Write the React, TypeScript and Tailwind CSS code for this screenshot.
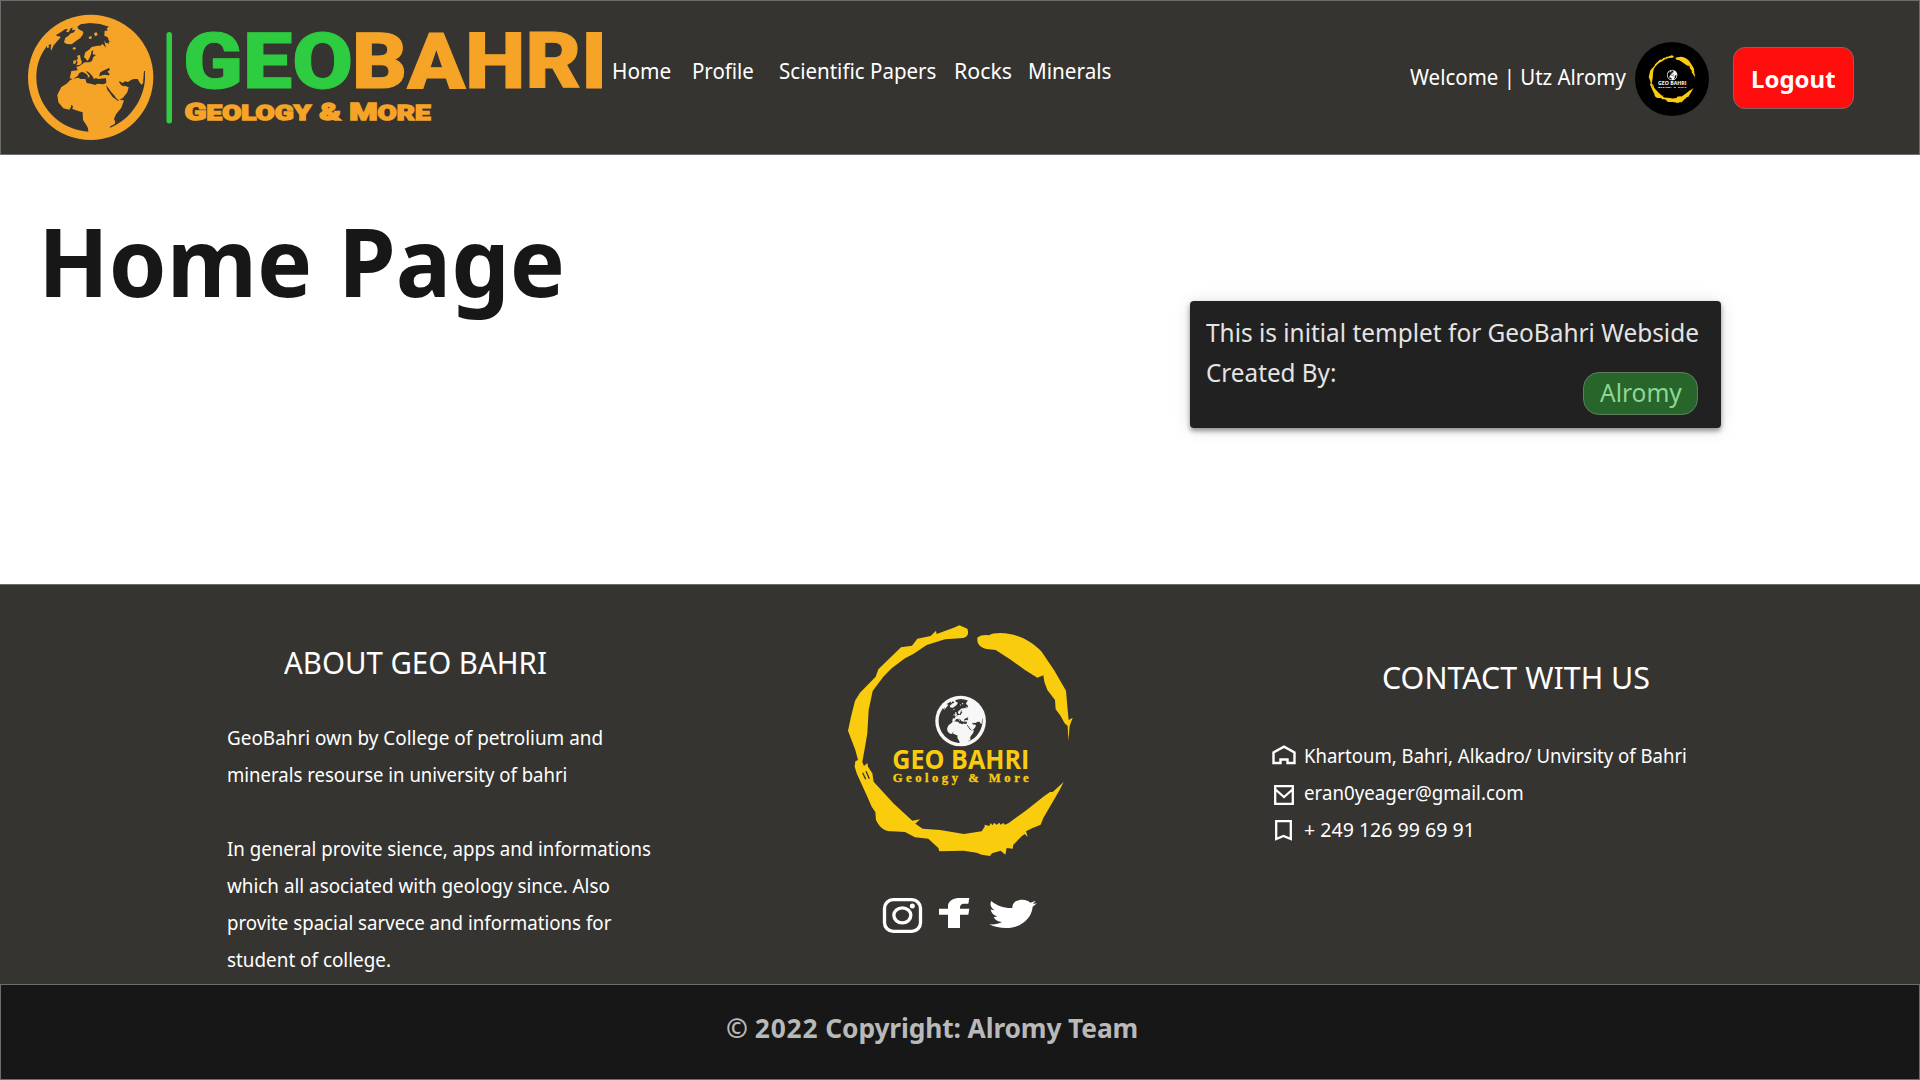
import React from "react";

function Line({ className = "", children }: { className?: string; children: React.ReactNode }) {
  return <span className={`block origin-left whitespace-nowrap ${className}`}>{children}</span>;
}

const OCEANS = [
  "M107,128 L110,122 L112,130 L118,126 L115,120 L124,118 L122,130 L124,137 L130,122 L142,108 L151,98 L150,94 L142,94 L138,90 L152,82 L165,73 L174,72 L168,80 L176,82 L182,70 L188,68 L186,76 L196,74 L192,82 L180,86 L176,92 L166,98 L162,112 L170,117 L185,118 L198,108 L212,98 L219,88 L220,80 L205,72 L202,65 L212,58 L240,54 L270,57 L297,65 L290,70 L293,77 L284,77 L283,92 L293,97 L297,108 L302,112 L296,110 L297,116 L287,113 L283,106 L285,118 L288,128 L278,117 L271,122 L262,122 L245,126 L237,134 L226,142 L222,156 L228,162 L233,168 L238,160 L243,148 L245,138 L250,136 L248,148 L258,150 L250,156 L246,168 L238,172 L224,172 L210,182 L199,186 L203,196 L184,198 L181,212 L179,220 L188,222 L180,226 L170,236 L154,246 L142,270 L145,292 L160,310 L178,314 L183,306 L184,299 L189,304 L187,312 L205,318 L218,322 L219,345 L229,360 L234,370 L235,380 C150,376 79,304 79,217 C79,182 89,153 107,128 Z",
  "M190,221 L203,213 L208,204 L217,200 L228,206 L234,213 L233,220 L240,213 L230,202 L228,197 L238,203 L247,213 L252,222 L258,219 L264,222 L288,220 L289,234 L280,238 L262,236 L256,240 L242,236 L230,234 L226,222 L212,222 L205,218 Z",
  "M267,214 L271,202 L282,196 L297,189 L300,194 L292,200 L299,207 L297,211 L282,209 Z",
  "M288,240 L297,252 L304,262 L312,270 L320,281 L327,286 L339,278 L352,262 L356,247 L344,242 L340,244 L333,240 L327,231 L329,229 L338,234 L345,229 L354,231 L362,226 L371,222 L383,222 L388,231 L394,239 L399,235 L402,198 L405,198 L405,220 C403,280 362,345 299,369 L302,363 L314,357 L316,351 L312,342 L318,328 L334,308 L342,286 L330,285 L323,287 L308,276 L300,265 L292,254 Z",
];
const ISLANDS = [
  "M201,152 L210,150 L212,162 L216,172 L211,179 L199,181 L203,172 L199,166 L204,161 Z",
  "M190,168 L197,164 L198,174 L190,178 Z",
  "M187,129 L195,126 L198,132 L191,134 Z",
  "M252,84 L260,82 L263,90 L255,94 Z",
  "M236,95 L246,94 L244,101 L238,102 Z",
];

function Globe({ land, sea }: { land: string; sea: string }) {
  return (
    <g>
      <circle cx="242" cy="217" r="188" fill={land} />
      {OCEANS.map((d) => <path key={d} d={d} fill={sea} />)}
      {ISLANDS.map((d) => <path key={d} d={d} fill={land} />)}
    </g>
  );
}

function BrandLogo() {
  return (
    <svg className="block h-[153px] w-[610px] shrink-0" viewBox="1 1 610 153">
      <g transform="translate(10 5) scale(0.33333)">
        <Globe land="#f5a427" sea="#363431" />
      </g>
      <rect x="166.5" y="32" width="5.5" height="91.5" rx="2.7" fill="#30cc44" />
      <g className="font-['Roboto'] font-black" fontSize="77" strokeWidth="1">
        <text x="183" y="87.6" textLength="170" lengthAdjust="spacingAndGlyphs" fill="#2ecc40" stroke="#2ecc40">GEO</text>
        <text x="352" y="87.6" textLength="255" lengthAdjust="spacingAndGlyphs" fill="#f5a427" stroke="#f5a427">BAHRI</text>
      </g>
      <text
        x="184.5" y="119.8" textLength="246" lengthAdjust="spacingAndGlyphs" fill="#f5a427"
        stroke="#f5a427" strokeWidth="1.4" className="font-['Roboto'] font-black uppercase" fontSize="24.5"
      >
        G<tspan fontSize="21">eology</tspan> &amp; M<tspan fontSize="21">ore</tspan>
      </text>
    </svg>
  );
}

function RingLogo({ className, sea, title, tagline }: { className: string; sea: string; title: string; tagline: string }) {
  return (
    <svg className={className} viewBox="0 0 780 780">
      <g fill="#f9cc0e">
        <path d="M412,56 L388,46 L375,52 L320,72 L318,62 L302,78 L262,86 L246,107 L213,112 L145,178 L137,200 L90,248 L75,272 L63,320 L54,362 L76,420 L84,450 L76,454 L74,470 L80,490 L96,525 L112,560 L125,590 L136,606 L138,630 C150,655 165,664 185,664 L225,666 L255,682 L295,686 L325,714 L328,724 L400,722 L440,728 L455,734 L480,738 L486,730 L512,722 L526,734 L530,714 L548,716 L550,704 L575,679 L584,672 L593,681 L588,664 L606,655 L632,644 L640,624 L668,576 L690,538 L701,516 L668,546 L660,546 L640,560 L590,600 L535,640 L525,644 L520,639 L512,644 L508,638 L500,644 L492,638 L488,646 L482,639 L478,648 L464,644 L464,650 L455,664 L402,672 L330,660 L278,656 L256,641 L270,628 L247,632 L190,580 L131,515 L127,490 L114,470 L112,459 L102,468 L97,456 L107,400 L112,370 L116,300 L128,243 L160,200 L185,175 L225,145 L250,132 L290,105 L345,88 L400,84 C416,80 416,66 412,56 Z" />
        <path d="M443,82 Q455,73 478,76 Q485,69 512,69 C555,70 600,88 635,125 L672,180 L708,242 L713,300 L716,330 L728,323 L719,348 L715,393 L713,348 L704,340 L690,315 L677,298 L675,270 L652,240 L643,215 L640,196 L622,203 L585,180 L540,148 L497,120 L470,117 C450,114 438,98 443,82 Z" />
      </g>
      <path d="M98,488 L107,508 M108,484 L118,506" stroke={sea} strokeWidth="4" />
      <g transform="translate(294 245.500) scale(0.404)">
        <Globe land="#f7f7f7" sea={sea} />
      </g>
      <text x="187" y="478" textLength="411" lengthAdjust="spacingAndGlyphs" fontSize="80" fill={title} className="font-['Open_Sans'] font-bold">GEO BAHRI</text>
      <text x="188" y="516" textLength="408" fontSize="38" fill={tagline} stroke={tagline} strokeWidth="1" className="font-['Liberation_Serif'] font-bold">Geology &amp; More</text>
    </svg>
  );
}

function SocialIcons() {
  return (
    <svg className="block h-[70px] w-[200px]" viewBox="0 0 600 210">
      <g fill="none" stroke="#fff">
        <rect x="73.500" y="59" width="108" height="95" rx="26" strokeWidth="10" />
        <ellipse cx="127" cy="106" rx="25.500" ry="22.500" strokeWidth="10" />
      </g>
      <circle cx="157" cy="78" r="7.500" fill="#fff" />
      <path fill="#fff" d="M264,144 V104 H237 V86 H264 V76 C266,62 280,54 300,54 H328 L325,71 H312 C304,71 301,75 300,82 V86 H328 L325,104 H300 V144 Z" />
      <path fill="#fff" d="M394,63 C411,78 432,85 457,84 C456,69 469,59 487,59 C498,59 506,63 511,68 L527,62 L519,72 L531,70 L518,80 C515,116 482,144 438,144 C420,144 402,141 388,133 C403,134 416,132 426,126 C413,125 405,120 401,111 L412,110 C400,106 393,98 392,88 C396,90 400,91 404,91 C393,84 388,74 394,63 Z" />
    </svg>
  );
}

const HomeIcon = () => (
  <svg className="block h-[20px] w-[24px]" viewBox="0 0 24 20" fill="none" stroke="#fff" strokeWidth="2.4">
    <path d="M1.500,18 V7.500 L12,1.700 L22.500,7.500 V18 H15.500 V14.500 H8.500 V18 Z" />
  </svg>
);
const MailIcon = () => (
  <svg className="block h-[20px] w-[20px]" viewBox="0 0 20 20" fill="none" stroke="#fff" strokeWidth="2.3">
    <path d="M1.200,1.200 H18.800 V18.800 H1.200 Z M1.500,4.500 L10,12 L18.500,4.500" />
  </svg>
);
const BookmarkIcon = () => (
  <svg className="block h-[21px] w-[17px]" viewBox="0 0 17 21" fill="none" stroke="#fff" strokeWidth="2.3">
    <path d="M1.200,1.200 H15.800 V19 L8.500,16 L1.200,19 Z" />
  </svg>
);

export default function App() {
  return (
    <div className="flex h-[1080px] w-[1920px] flex-col overflow-hidden bg-white font-['Noto_Sans','Liberation_Sans',sans-serif]">
      <header className="flex h-[155px] shrink-0 items-start border border-[#6c6c6a] bg-[#363431] text-white">
        <BrandLogo />
        <nav className="mt-[55.500px] ml-px flex text-[22.4px] leading-[28px]">
          <a className="w-[80px]"><Line className="scale-x-[0.93]">Home</Line></a>
          <a className="w-[87px]"><Line className="scale-x-[0.913]">Profile</Line></a>
          <a className="w-[175px]"><Line className="scale-x-[0.917]">Scientific Papers</Line></a>
          <a className="w-[74px]"><Line className="scale-x-[0.952]">Rocks</Line></a>
          <a className="w-[90px]"><Line className="scale-x-[0.923]">Minerals</Line></a>
        </nav>
        <div className="ml-auto mt-[61px] w-[225px] text-[22px] leading-[28px]">
          <Line className="scale-x-[0.93]">Welcome | Utz Alromy</Line>
        </div>
        <div className="mt-[41px] flex h-[74px] w-[74px] shrink-0 items-center justify-center rounded-full bg-black">
          <RingLogo className="h-[54px] w-[54px]" sea="#000" title="#fff" tagline="#fff" />
        </div>
        <button className="mt-[46px] mr-[65px] ml-[24px] h-[62px] w-[121px] shrink-0 rounded-[12px] border border-[#7c6866] bg-[#ff0d0d] pt-[1px] pl-[17px] text-left text-[24px] font-bold">
          <Line>Logout</Line>
        </button>
      </header>

      <main className="flex h-[429px] shrink-0 items-start justify-between">
        <h1 className="mt-[55.500px] ml-[38px] text-[94.5px] leading-[100px] font-bold text-[#171717]">
          <Line className="scale-x-[0.98] [word-spacing:2px]">Home Page</Line>
        </h1>
        <section className="mt-[146px] mr-[199px] h-[127px] w-[531px] rounded-[4px] bg-[#212121] pt-[11px] pr-[23px] pl-[16px] text-[25px] leading-[40px] text-[#e4e4e4] shadow-[0_3px_5px_rgba(0,0,0,0.4),0_1px_18px_rgba(0,0,0,0.12)]">
          <Line className="scale-x-[0.976]">This is initial templet for GeoBahri Webside</Line>
          <div className="flex items-start justify-between">
            <Line className="scale-x-[0.97]">Created By:</Line>
            <div className="mt-[20px] flex h-[43px] w-[115px] items-center rounded-[16px] border border-[#5d7d5f] bg-[#27652b] pb-[3px] pl-[16px] text-[#8fd694]">
              <Line className="scale-x-[0.98]">Alromy</Line>
            </div>
          </div>
        </section>
      </main>

      <footer className="flex min-h-0 flex-1 flex-col text-white">
        <div className="flex h-[400px] shrink-0 items-start border-t border-[#6c6c6a] bg-[#363431]">
          <section className="w-[830px] pt-[58px] pl-[227px]">
            <h2 className="ml-[57px] text-[30px] leading-[40px]">
              <Line className="scale-x-[0.981]">ABOUT GEO BAHRI</Line>
            </h2>
            <div className="mt-[36px] text-[20px] leading-[37px]">
              <Line className="scale-x-[0.945]">GeoBahri own by College of petrolium and</Line>
              <Line className="scale-x-[0.927]">minerals resourse in university of bahri</Line>
              <Line className="mt-[37px] scale-x-[0.933]">In general provite sience, apps and informations</Line>
              <Line className="scale-x-[0.942]">which all asociated with geology since. Also</Line>
              <Line className="scale-x-[0.934]">provite spacial sarvece and informations for</Line>
              <Line className="scale-x-[0.943]">student of college.</Line>
            </div>
          </section>
          <section className="w-[440px] pt-[25px]">
            <RingLogo className="block h-[260px] w-[260px]" sea="#363431" title="#f9cc0e" tagline="#f9cc0e" />
            <div className="mt-[10px] ml-[30px]"><SocialIcons /></div>
          </section>
          <section className="pt-[73px]">
            <h2 className="ml-[112px] text-[30px] leading-[40px]">
              <Line className="scale-x-[1.014]">CONTACT WITH US</Line>
            </h2>
            <ul className="mt-[39px] text-[20px] leading-[37px]">
              <li className="flex items-center"><span className="-mt-[2px] mr-[6px] ml-[2px] w-[26px]"><HomeIcon /></span><Line className="scale-x-[0.928]">Khartoum, Bahri, Alkadro/ Unvirsity of Bahri</Line></li>
              <li className="flex items-center"><span className="mt-[4px] mr-[6px] ml-[4px] w-[24px]"><MailIcon /></span><Line className="scale-x-[0.935]">eran0yeager@gmail.com</Line></li>
              <li className="flex items-center"><span className="mt-px mr-[6px] ml-[5px] w-[23px]"><BookmarkIcon /></span><Line className="scale-x-[0.978]">+ 249 126 99 69 91</Line></li>
            </ul>
          </section>
        </div>
        <div className="flex-1 border border-[#6c6c6a] bg-[#171717] pt-[23px] pl-[725px] text-[26px] leading-[40px] font-bold text-[#b9b9b9]">
          <Line className="scale-x-[1.014]">© <span className="tracking-[0.8px]">2022</span> <span className="tracking-[-0.13px]">Copyright: Alromy Team</span></Line>
        </div>
      </footer>
    </div>
  );
}
